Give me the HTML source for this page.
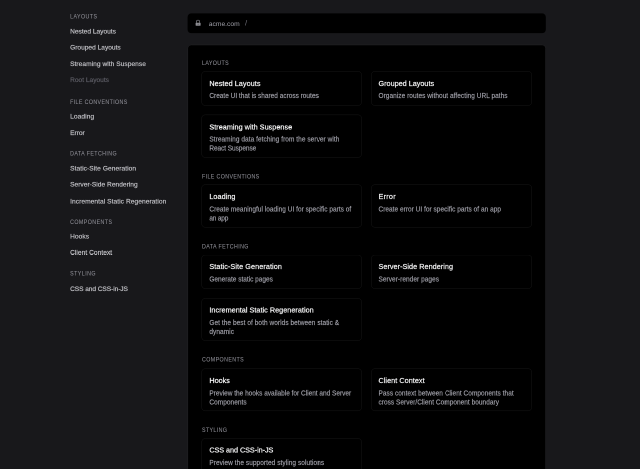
<!DOCTYPE html><html><head><meta charset="utf-8"><style>
html,body{margin:0;padding:0;}
body{width:640px;height:469px;overflow:hidden;background:#18181b;position:relative;font-family:"Liberation Sans",sans-serif;}
#outer{position:absolute;left:0;top:0;width:1280px;height:938px;transform:scale(0.5);transform-origin:0 0;will-change:transform;}
#root{position:absolute;left:0;top:0;width:1429.4px;height:1047.5px;transform:scale(0.8955);transform-origin:0 0;}
.t{position:absolute;white-space:nowrap;}
.bar{position:absolute;left:418.98px;top:29.93px;width:800.00px;height:43.77px;background:#000;border-radius:8px;}
.panel{position:absolute;box-sizing:border-box;left:418.98px;top:100.28px;width:800.00px;height:1027.36px;background:#000;border-radius:8px;border:1px solid #27272a;}
.card{position:absolute;box-sizing:border-box;border:1px solid rgba(255,255,255,0.1);border-radius:8px;}
</style></head><body><div id="outer"><div id="root">
<div class="t" style="left:156.56px;top:31.41px;font-size:11.837px;line-height:15.388px;color:#8b8b93;letter-spacing:0.961px;-webkit-text-stroke:0.150px #8b8b93;transform:scaleY(1.22);transform-origin:0 11.80px;">LAYOUTS</div>
<div class="t" style="left:156.56px;top:61.11px;font-size:14.740px;line-height:19.162px;color:#c2c2c7;-webkit-text-stroke:0.400px #c2c2c7;">Nested Layouts</div>
<div class="t" style="left:156.56px;top:97.30px;font-size:14.740px;line-height:19.162px;color:#c2c2c7;-webkit-text-stroke:0.400px #c2c2c7;">Grouped Layouts</div>
<div class="t" style="left:156.56px;top:133.25px;font-size:14.740px;line-height:19.162px;color:#c2c2c7;letter-spacing:0.100px;-webkit-text-stroke:0.400px #c2c2c7;">Streaming with Suspense</div>
<div class="t" style="left:156.56px;top:169.43px;font-size:14.740px;line-height:19.162px;color:#5b5b63;-webkit-text-stroke:0.500px #5b5b63;">Root Layouts</div>
<div class="t" style="left:156.56px;top:221.25px;font-size:11.837px;line-height:15.388px;color:#8b8b93;letter-spacing:0.849px;-webkit-text-stroke:0.150px #8b8b93;transform:scaleY(1.22);transform-origin:0 11.80px;">FILE CONVENTIONS</div>
<div class="t" style="left:156.56px;top:250.51px;font-size:14.740px;line-height:19.162px;color:#c2c2c7;letter-spacing:0.211px;-webkit-text-stroke:0.400px #c2c2c7;">Loading</div>
<div class="t" style="left:156.56px;top:287.13px;font-size:14.740px;line-height:19.162px;color:#c2c2c7;-webkit-text-stroke:0.400px #c2c2c7;">Error</div>
<div class="t" style="left:156.56px;top:336.49px;font-size:11.837px;line-height:15.388px;color:#8b8b93;letter-spacing:0.929px;-webkit-text-stroke:0.150px #8b8b93;transform:scaleY(1.22);transform-origin:0 11.80px;">DATA FETCHING</div>
<div class="t" style="left:156.56px;top:367.09px;font-size:14.740px;line-height:19.162px;color:#c2c2c7;letter-spacing:0.154px;-webkit-text-stroke:0.400px #c2c2c7;">Static-Site Generation</div>
<div class="t" style="left:156.56px;top:403.05px;font-size:14.740px;line-height:19.162px;color:#c2c2c7;letter-spacing:0.051px;-webkit-text-stroke:0.400px #c2c2c7;">Server-Side Rendering</div>
<div class="t" style="left:156.56px;top:439.67px;font-size:14.740px;line-height:19.162px;color:#c2c2c7;letter-spacing:0.143px;-webkit-text-stroke:0.400px #c2c2c7;">Incremental Static Regeneration</div>
<div class="t" style="left:156.56px;top:488.59px;font-size:11.837px;line-height:15.388px;color:#8b8b93;letter-spacing:0.983px;-webkit-text-stroke:0.150px #8b8b93;transform:scaleY(1.22);transform-origin:0 11.80px;">COMPONENTS</div>
<div class="t" style="left:156.56px;top:518.96px;font-size:14.740px;line-height:19.162px;color:#c2c2c7;letter-spacing:0.164px;-webkit-text-stroke:0.400px #c2c2c7;">Hooks</div>
<div class="t" style="left:156.56px;top:554.47px;font-size:14.740px;line-height:19.162px;color:#c2c2c7;letter-spacing:0.103px;-webkit-text-stroke:0.400px #c2c2c7;">Client Context</div>
<div class="t" style="left:156.56px;top:604.72px;font-size:11.837px;line-height:15.388px;color:#8b8b93;letter-spacing:1.036px;-webkit-text-stroke:0.150px #8b8b93;transform:scaleY(1.22);transform-origin:0 11.80px;">STYLING</div>
<div class="t" style="left:156.56px;top:635.54px;font-size:14.740px;line-height:19.162px;color:#c2c2c7;letter-spacing:-0.166px;-webkit-text-stroke:0.400px #c2c2c7;">CSS and CSS-in-JS</div>
<div class="bar"></div>
<svg style="position:absolute;left:436.40px;top:44.22px" width="12.95px" height="13.85px" viewBox="0 0 5.8 6.2">
<path d="M1.3 3.2 V1.85 a1.5 1.5 0 0 1 3.0 0 V3.2" fill="none" stroke="#8c8c92" stroke-width="0.65"/>
<rect x="0.4" y="3.05" width="5.0" height="2.95" rx="0.45" fill="#8c8c92"/>
<circle cx="2.9" cy="4.45" r="0.42" fill="#000" fill-opacity="0.7"/></svg>
<div class="t" style="left:466.33px;top:43.02px;font-size:14.964px;line-height:19.453px;color:#a1a1aa;">acme.com</div>
<div class="t" style="left:547.18px;top:41.44px;font-size:16.974px;line-height:22.066px;color:#71717a;">/</div>
<div class="panel"></div>
<div class="t" style="left:451.14px;top:134.15px;font-size:11.837px;line-height:15.388px;color:#8b8b93;letter-spacing:0.849px;-webkit-text-stroke:0.150px #8b8b93;transform:scaleY(1.22);transform-origin:0 11.80px;">LAYOUTS</div>
<div class="t" style="left:451.14px;top:387.64px;font-size:11.837px;line-height:15.388px;color:#8b8b93;letter-spacing:0.849px;-webkit-text-stroke:0.150px #8b8b93;transform:scaleY(1.22);transform-origin:0 11.80px;">FILE CONVENTIONS</div>
<div class="t" style="left:451.14px;top:543.75px;font-size:11.837px;line-height:15.388px;color:#8b8b93;letter-spacing:0.903px;-webkit-text-stroke:0.150px #8b8b93;transform:scaleY(1.22);transform-origin:0 11.80px;">DATA FETCHING</div>
<div class="t" style="left:451.14px;top:797.02px;font-size:11.837px;line-height:15.388px;color:#8b8b93;letter-spacing:0.936px;-webkit-text-stroke:0.150px #8b8b93;transform:scaleY(1.22);transform-origin:0 11.80px;">COMPONENTS</div>
<div class="t" style="left:451.14px;top:953.58px;font-size:11.837px;line-height:15.388px;color:#8b8b93;letter-spacing:0.849px;-webkit-text-stroke:0.150px #8b8b93;transform:scaleY(1.22);transform-origin:0 11.80px;">STYLING</div>
<div class="card" style="left:450.09px;top:159.41px;width:358.01px;height:76.71px"></div>
<div class="t" style="left:467.56px;top:175.91px;font-size:16.192px;line-height:21.05px;color:#f4f4f5;letter-spacing:0.128px;-webkit-text-stroke:0.450px #f4f4f5;transform:scaleY(1.05);transform-origin:0 16.14px;">Nested Layouts</div>
<div class="t" style="left:467.56px;top:205.24px;font-size:14.517px;line-height:18.872px;color:#a1a1aa;-webkit-text-stroke:0.300px #a1a1aa;transform:scaleY(1.06);transform-origin:0 14.47px;">Create UI that is shared across routes</div>
<div class="card" style="left:829.20px;top:159.41px;width:358.57px;height:76.71px"></div>
<div class="t" style="left:845.34px;top:175.91px;font-size:16.192px;line-height:21.05px;color:#f4f4f5;-webkit-text-stroke:0.450px #f4f4f5;transform:scaleY(1.05);transform-origin:0 16.14px;">Grouped Layouts</div>
<div class="t" style="left:845.34px;top:205.24px;font-size:14.517px;line-height:18.872px;color:#a1a1aa;letter-spacing:0.107px;-webkit-text-stroke:0.300px #a1a1aa;transform:scaleY(1.06);transform-origin:0 14.47px;">Organize routes without affecting URL paths</div>
<div class="card" style="left:450.09px;top:256.12px;width:358.01px;height:95.58px"></div>
<div class="t" style="left:467.56px;top:272.61px;font-size:16.192px;line-height:21.05px;color:#f4f4f5;letter-spacing:0.065px;-webkit-text-stroke:0.450px #f4f4f5;transform:scaleY(1.05);transform-origin:0 16.14px;">Streaming with Suspense</div>
<div class="t" style="left:467.56px;top:301.94px;font-size:14.517px;line-height:18.872px;color:#a1a1aa;letter-spacing:0.138px;-webkit-text-stroke:0.300px #a1a1aa;transform:scaleY(1.06);transform-origin:0 14.47px;">Streaming data fetching from the server with</div>
<div class="t" style="left:467.56px;top:322.04px;font-size:14.517px;line-height:18.872px;color:#a1a1aa;letter-spacing:-0.123px;-webkit-text-stroke:0.300px #a1a1aa;transform:scaleY(1.06);transform-origin:0 14.47px;">React Suspense</div>
<div class="card" style="left:450.09px;top:411.78px;width:358.01px;height:96.25px"></div>
<div class="t" style="left:467.56px;top:428.28px;font-size:16.192px;line-height:21.05px;color:#f4f4f5;letter-spacing:0.121px;-webkit-text-stroke:0.450px #f4f4f5;transform:scaleY(1.05);transform-origin:0 16.14px;">Loading</div>
<div class="t" style="left:467.56px;top:457.61px;font-size:14.517px;line-height:18.872px;color:#a1a1aa;letter-spacing:0.069px;-webkit-text-stroke:0.300px #a1a1aa;transform:scaleY(1.06);transform-origin:0 14.47px;">Create meaningful loading UI for specific parts of</div>
<div class="t" style="left:467.56px;top:477.71px;font-size:14.517px;line-height:18.872px;color:#a1a1aa;letter-spacing:-0.384px;-webkit-text-stroke:0.300px #a1a1aa;transform:scaleY(1.06);transform-origin:0 14.47px;">an app</div>
<div class="card" style="left:829.20px;top:411.78px;width:358.57px;height:96.25px"></div>
<div class="t" style="left:845.34px;top:428.28px;font-size:16.192px;line-height:21.05px;color:#f4f4f5;letter-spacing:0.558px;-webkit-text-stroke:0.450px #f4f4f5;transform:scaleY(1.05);transform-origin:0 16.14px;">Error</div>
<div class="t" style="left:845.34px;top:457.61px;font-size:14.517px;line-height:18.872px;color:#a1a1aa;letter-spacing:0.063px;-webkit-text-stroke:0.300px #a1a1aa;transform:scaleY(1.06);transform-origin:0 14.47px;">Create error UI for specific parts of an app</div>
<div class="card" style="left:450.09px;top:568.79px;width:358.01px;height:76.71px"></div>
<div class="t" style="left:467.56px;top:585.29px;font-size:16.192px;line-height:21.05px;color:#f4f4f5;letter-spacing:0.171px;-webkit-text-stroke:0.450px #f4f4f5;transform:scaleY(1.05);transform-origin:0 16.14px;">Static-Site Generation</div>
<div class="t" style="left:467.56px;top:614.62px;font-size:14.517px;line-height:18.872px;color:#a1a1aa;-webkit-text-stroke:0.300px #a1a1aa;transform:scaleY(1.06);transform-origin:0 14.47px;">Generate static pages</div>
<div class="card" style="left:829.20px;top:568.79px;width:358.57px;height:76.71px"></div>
<div class="t" style="left:845.34px;top:585.29px;font-size:16.192px;line-height:21.05px;color:#f4f4f5;letter-spacing:0.086px;-webkit-text-stroke:0.450px #f4f4f5;transform:scaleY(1.05);transform-origin:0 16.14px;">Server-Side Rendering</div>
<div class="t" style="left:845.34px;top:614.62px;font-size:14.517px;line-height:18.872px;color:#a1a1aa;letter-spacing:0.117px;-webkit-text-stroke:0.300px #a1a1aa;transform:scaleY(1.06);transform-origin:0 14.47px;">Server-render pages</div>
<div class="card" style="left:450.09px;top:665.94px;width:358.01px;height:95.03px"></div>
<div class="t" style="left:467.56px;top:682.44px;font-size:16.192px;line-height:21.05px;color:#f4f4f5;letter-spacing:0.058px;-webkit-text-stroke:0.450px #f4f4f5;transform:scaleY(1.05);transform-origin:0 16.14px;">Incremental Static Regeneration</div>
<div class="t" style="left:467.56px;top:711.77px;font-size:14.517px;line-height:18.872px;color:#a1a1aa;letter-spacing:0.140px;-webkit-text-stroke:0.300px #a1a1aa;transform:scaleY(1.06);transform-origin:0 14.47px;">Get the best of both worlds between static &amp;</div>
<div class="t" style="left:467.56px;top:731.87px;font-size:14.517px;line-height:18.872px;color:#a1a1aa;letter-spacing:0.158px;-webkit-text-stroke:0.300px #a1a1aa;transform:scaleY(1.06);transform-origin:0 14.47px;">dynamic</div>
<div class="card" style="left:450.09px;top:822.95px;width:358.01px;height:95.47px"></div>
<div class="t" style="left:467.56px;top:839.45px;font-size:16.192px;line-height:21.05px;color:#f4f4f5;-webkit-text-stroke:0.450px #f4f4f5;transform:scaleY(1.05);transform-origin:0 16.14px;">Hooks</div>
<div class="t" style="left:467.56px;top:868.78px;font-size:14.517px;line-height:18.872px;color:#a1a1aa;-webkit-text-stroke:0.300px #a1a1aa;transform:scaleY(1.06);transform-origin:0 14.47px;">Preview the hooks available for Client and Server</div>
<div class="t" style="left:467.56px;top:888.88px;font-size:14.517px;line-height:18.872px;color:#a1a1aa;letter-spacing:0.117px;-webkit-text-stroke:0.300px #a1a1aa;transform:scaleY(1.06);transform-origin:0 14.47px;">Components</div>
<div class="card" style="left:829.20px;top:822.95px;width:358.57px;height:95.47px"></div>
<div class="t" style="left:845.34px;top:839.45px;font-size:16.192px;line-height:21.05px;color:#f4f4f5;letter-spacing:0.103px;-webkit-text-stroke:0.450px #f4f4f5;transform:scaleY(1.05);transform-origin:0 16.14px;">Client Context</div>
<div class="t" style="left:845.34px;top:868.78px;font-size:14.517px;line-height:18.872px;color:#a1a1aa;letter-spacing:0.106px;-webkit-text-stroke:0.300px #a1a1aa;transform:scaleY(1.06);transform-origin:0 14.47px;">Pass context between Client Components that</div>
<div class="t" style="left:845.34px;top:888.88px;font-size:14.517px;line-height:18.872px;color:#a1a1aa;letter-spacing:0.082px;-webkit-text-stroke:0.300px #a1a1aa;transform:scaleY(1.06);transform-origin:0 14.47px;">cross Server/Client Component boundary</div>
<div class="card" style="left:450.09px;top:978.84px;width:358.01px;height:76.71px"></div>
<div class="t" style="left:467.56px;top:995.34px;font-size:16.192px;line-height:21.05px;color:#f4f4f5;letter-spacing:-0.113px;-webkit-text-stroke:0.450px #f4f4f5;transform:scaleY(1.05);transform-origin:0 16.14px;">CSS and CSS-in-JS</div>
<div class="t" style="left:467.56px;top:1024.67px;font-size:14.517px;line-height:18.872px;color:#a1a1aa;letter-spacing:0.151px;-webkit-text-stroke:0.300px #a1a1aa;transform:scaleY(1.06);transform-origin:0 14.47px;">Preview the supported styling solutions</div>
</div></div></body></html>
